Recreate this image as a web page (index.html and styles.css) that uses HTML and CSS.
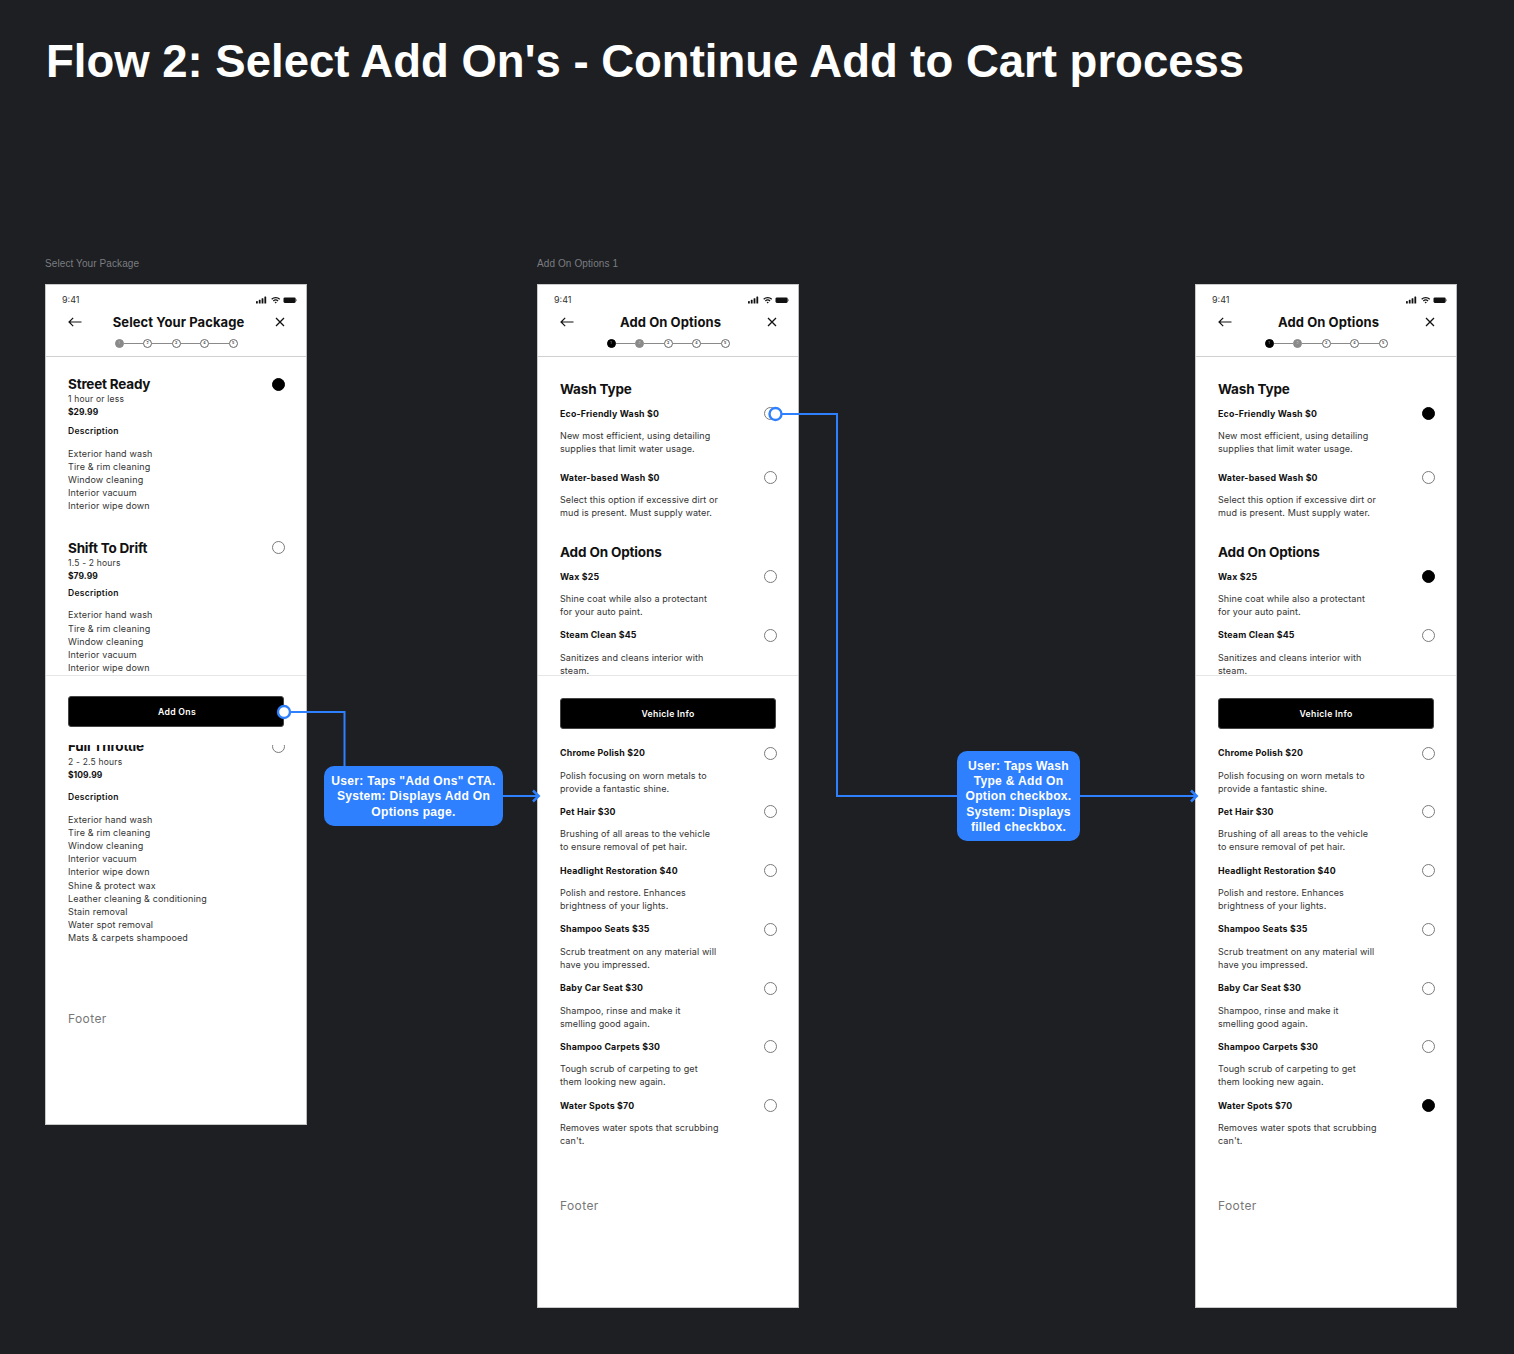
FILE: index.html
```html
<!DOCTYPE html>
<html lang="en">
<head>
<meta charset="utf-8">
<title>Flow 2</title>
<link rel="stylesheet" href="styles.css">
</head>
<body>
<svg class="sprite" aria-hidden="true">
  <symbol id="status" viewBox="0 0 41 8">
    <rect x="0" y="5" width="1.8" height="2.6" rx=".4"/><rect x="2.8" y="3.7" width="1.8" height="3.9" rx=".4"/><rect x="5.6" y="2.2" width="1.8" height="5.4" rx=".4"/><rect x="8.4" y=".6" width="1.8" height="7" rx=".4"/>
    <path d="M15.2 2.7a6.6 6.6 0 0 1 9 0l-.9 1a5.3 5.3 0 0 0-7.2 0zM16.9 4.5a4.1 4.1 0 0 1 5.6 0l-.9 1a2.8 2.8 0 0 0-3.8 0zM18.6 6.2a1.6 1.6 0 0 1 2.2 0l-1.1 1.3z"/>
    <rect x="27.5" y="1.4" width="12.2" height="5.6" rx="1.4"/><rect x="40" y="3.2" width=".9" height="2" rx=".4" opacity=".5"/>
  </symbol>
  <symbol id="back" viewBox="0 0 14 10"><path d="M13.5 5H1M5.2.8 1 5l4.2 4.2" fill="none" stroke="#111" stroke-width="1.2"/></symbol>
  <symbol id="close" viewBox="0 0 10 10"><path d="M1 1l8 8M9 1 1 9" fill="none" stroke="#111" stroke-width="1.3"/></symbol>
</svg>
<main class="canvas">
  <h1 class="flow-title">Flow 2: Select Add On's - Continue Add to Cart process</h1>

  <div class="board-label label-a">Select Your Package</div>
  <div class="board-label label-b">Add On Options 1</div>

  <section class="phone phone-a">
    <header class="head">
      <div class="status"><span>9:41</span><svg class="status-icons"><use href="#status"/></svg></div>
      <div class="nav"><svg class="back"><use href="#back"/></svg><span class="nav-title">Select Your Package</span><svg class="close"><use href="#close"/></svg></div>
      <div class="stepper"><i class="dot cur">1</i><b></b><i class="dot">2</i><b></b><i class="dot">3</i><b></b><i class="dot">4</i><b></b><i class="dot">5</i></div>
    </header>
    <div class="upper upper-pkg">
      <article class="pkg">
        <div class="pkg-head"><h2>Street Ready</h2><span class="radio on"></span></div>
        <p>1 hour or less</p><p class="price">$29.99</p>
        <h3>Description</h3>
        <ul><li>Exterior hand wash</li><li>Tire &amp; rim cleaning</li><li>Window cleaning</li><li>Interior vacuum</li><li>Interior wipe down</li></ul>
      </article>
      <article class="pkg pkg-second">
        <div class="pkg-head"><h2>Shift To Drift</h2><span class="radio"></span></div>
        <p>1.5 - 2 hours</p><p class="price">$79.99</p>
        <h3>Description</h3>
        <ul><li>Exterior hand wash</li><li>Tire &amp; rim cleaning</li><li>Window cleaning</li><li>Interior vacuum</li><li>Interior wipe down</li></ul>
      </article>
    </div>
    <div class="cta cta-pkg"><button class="cta-btn">Add Ons</button></div>
    <div class="lower">
      <article class="pkg pkg-third">
        <div class="pkg-head"><h2>Full Throttle</h2><span class="radio"></span></div>
        <p>2 - 2.5 hours</p><p class="price">$109.99</p>
        <h3>Description</h3>
        <ul class="long"><li>Exterior hand wash</li><li>Tire &amp; rim cleaning</li><li>Window cleaning</li><li>Interior vacuum</li><li>Interior wipe down</li><li>Shine &amp; protect wax</li><li>Leather cleaning &amp; conditioning</li><li>Stain removal</li><li>Water spot removal</li><li>Mats &amp; carpets shampooed</li></ul>
      </article>
      <div class="foot foot-pkg">Footer</div>
    </div>
  </section>

  <section class="phone phone-b">
    <header class="head">
      <div class="status"><span>9:41</span><svg class="status-icons"><use href="#status"/></svg></div>
      <div class="nav"><svg class="back"><use href="#back"/></svg><span class="nav-title">Add On Options</span><svg class="close"><use href="#close"/></svg></div>
      <div class="stepper"><i class="dot done">1</i><b></b><i class="dot cur">2</i><b></b><i class="dot">3</i><b></b><i class="dot">4</i><b></b><i class="dot">5</i></div>
    </header>
    <div class="upper">
      <h2 class="group">Wash Type</h2>
      <div class="opt opt-wide"><div class="opt-row"><h4>Eco-Friendly Wash $0</h4><span class="radio"></span></div><p>New most efficient, using detailing<br>supplies that limit water usage.</p></div>
      <div class="opt"><div class="opt-row"><h4>Water-based Wash $0</h4><span class="radio"></span></div><p>Select this option if excessive dirt or<br>mud is present. Must supply water.</p></div>
      <h2 class="group group-next">Add On Options</h2>
      <div class="opt"><div class="opt-row"><h4>Wax $25</h4><span class="radio"></span></div><p>Shine coat while also a protectant<br>for your auto paint.</p></div>
      <div class="opt"><div class="opt-row"><h4>Steam Clean $45</h4><span class="radio"></span></div><p>Sanitizes and cleans interior with<br>steam.</p></div>
    </div>
    <div class="cta"><button class="cta-btn">Vehicle Info</button></div>
    <div class="lower">
      <div class="opt"><div class="opt-row"><h4>Chrome Polish $20</h4><span class="radio"></span></div><p>Polish focusing on worn metals to<br>provide a fantastic shine.</p></div>
      <div class="opt"><div class="opt-row"><h4>Pet Hair $30</h4><span class="radio"></span></div><p>Brushing of all areas to the vehicle<br>to ensure removal of pet hair.</p></div>
      <div class="opt"><div class="opt-row"><h4>Headlight Restoration $40</h4><span class="radio"></span></div><p>Polish and restore. Enhances<br>brightness of your lights.</p></div>
      <div class="opt"><div class="opt-row"><h4>Shampoo Seats $35</h4><span class="radio"></span></div><p>Scrub treatment on any material will<br>have you impressed.</p></div>
      <div class="opt"><div class="opt-row"><h4>Baby Car Seat $30</h4><span class="radio"></span></div><p>Shampoo, rinse and make it<br>smelling good again.</p></div>
      <div class="opt"><div class="opt-row"><h4>Shampoo Carpets $30</h4><span class="radio"></span></div><p>Tough scrub of carpeting to get<br>them looking new again.</p></div>
      <div class="opt"><div class="opt-row"><h4>Water Spots $70</h4><span class="radio"></span></div><p>Removes water spots that scrubbing<br>can't.</p></div>
      <div class="foot">Footer</div>
    </div>
  </section>

  <section class="phone phone-c">
    <header class="head">
      <div class="status"><span>9:41</span><svg class="status-icons"><use href="#status"/></svg></div>
      <div class="nav"><svg class="back"><use href="#back"/></svg><span class="nav-title">Add On Options</span><svg class="close"><use href="#close"/></svg></div>
      <div class="stepper"><i class="dot done">1</i><b></b><i class="dot cur">2</i><b></b><i class="dot">3</i><b></b><i class="dot">4</i><b></b><i class="dot">5</i></div>
    </header>
    <div class="upper">
      <h2 class="group">Wash Type</h2>
      <div class="opt opt-wide"><div class="opt-row"><h4>Eco-Friendly Wash $0</h4><span class="radio on"></span></div><p>New most efficient, using detailing<br>supplies that limit water usage.</p></div>
      <div class="opt"><div class="opt-row"><h4>Water-based Wash $0</h4><span class="radio"></span></div><p>Select this option if excessive dirt or<br>mud is present. Must supply water.</p></div>
      <h2 class="group group-next">Add On Options</h2>
      <div class="opt"><div class="opt-row"><h4>Wax $25</h4><span class="radio on"></span></div><p>Shine coat while also a protectant<br>for your auto paint.</p></div>
      <div class="opt"><div class="opt-row"><h4>Steam Clean $45</h4><span class="radio"></span></div><p>Sanitizes and cleans interior with<br>steam.</p></div>
    </div>
    <div class="cta"><button class="cta-btn">Vehicle Info</button></div>
    <div class="lower">
      <div class="opt"><div class="opt-row"><h4>Chrome Polish $20</h4><span class="radio"></span></div><p>Polish focusing on worn metals to<br>provide a fantastic shine.</p></div>
      <div class="opt"><div class="opt-row"><h4>Pet Hair $30</h4><span class="radio"></span></div><p>Brushing of all areas to the vehicle<br>to ensure removal of pet hair.</p></div>
      <div class="opt"><div class="opt-row"><h4>Headlight Restoration $40</h4><span class="radio"></span></div><p>Polish and restore. Enhances<br>brightness of your lights.</p></div>
      <div class="opt"><div class="opt-row"><h4>Shampoo Seats $35</h4><span class="radio"></span></div><p>Scrub treatment on any material will<br>have you impressed.</p></div>
      <div class="opt"><div class="opt-row"><h4>Baby Car Seat $30</h4><span class="radio"></span></div><p>Shampoo, rinse and make it<br>smelling good again.</p></div>
      <div class="opt"><div class="opt-row"><h4>Shampoo Carpets $30</h4><span class="radio"></span></div><p>Tough scrub of carpeting to get<br>them looking new again.</p></div>
      <div class="opt"><div class="opt-row"><h4>Water Spots $70</h4><span class="radio on"></span></div><p>Removes water spots that scrubbing<br>can't.</p></div>
      <div class="foot">Footer</div>
    </div>
  </section>

  <svg class="wires" viewBox="0 0 1514 1354">
    <path class="wire" d="M290 712H344.5V767"/>
    <path class="wire" d="M503 796H538.5"/>
    <path class="wire chevron" d="M533 790.500 538.700 796 533 801.500"/>
    <circle class="node" cx="284" cy="712" r="6"/>
    <path class="wire" d="M781 414H837V796H957"/>
    <path class="wire" d="M1080 796H1196"/>
    <path class="wire chevron" d="M1191 790.500 1196.700 796 1191 801.500"/>
    <circle class="node" cx="775.500" cy="414" r="6"/>
  </svg>

  <div class="note note-a">User: Taps "Add Ons" CTA.<br>System: Displays Add On<br>Options page.</div>
  <div class="note note-b">User: Taps Wash<br>Type &amp; Add On<br>Option checkbox.<br>System: Displays<br>filled checkbox.</div>
</main>
</body>
</html>
```
FILE: styles.css
```css
* { box-sizing: border-box; }
html, body { margin: 0; padding: 0; background: #1e1f22; }
.sprite { width: 0; height: 0; position: absolute; }
.canvas { position: relative; width: 1514px; height: 1354px; overflow: hidden; background: #1e1f22; font-family: Inter, "Noto Sans", sans-serif; }
.flow-title { margin: 0; padding: 35px 0 0 46px; font: 700 45.500px/54px "Liberation Sans", Arial, sans-serif; color: #fff; white-space: nowrap; }
.board-label { position: absolute; top: 257px; font: 400 10px/13px "Liberation Sans", Arial, sans-serif; letter-spacing: .1px; color: #7a7d81; }
.label-a { left: 45px; }
.label-b { left: 537px; }

.phone { position: absolute; top: 284px; width: 262px; background: #fff; border: 1px solid #c9c9c9; border-right-color: #bdbdbd; display: flex; flex-direction: column; overflow: hidden; color: #111; }
.phone-a { left: 45px; height: 841px; }
.phone-b { left: 537px; height: 1024px; }
.phone-c { left: 1195px; height: 1024px; }

.head { height: 72px; flex: none; border-bottom: 1px solid #d0d0d0; }
.status { display: flex; justify-content: space-between; align-items: center; height: 14px; margin-top: 8px; padding: 0 9px 0 16px; font-size: 9px; line-height: 14px; color: #333; }
.status-icons { width: 41px; height: 8px; fill: #111; }
.nav { display: flex; justify-content: space-between; align-items: center; height: 20px; margin-top: 5px; padding: 0 21px 0 22px; }
.back { width: 14px; height: 10px; }
.close { width: 10px; height: 10px; }
.nav-title { font-size: 13px; font-weight: 700; line-height: 20px; letter-spacing: .08px; color: #111; }
.stepper { display: flex; justify-content: center; align-items: center; height: 9px; margin-top: 7px; }
.stepper b { width: 19.500px; height: 1px; background: #8a8a8a; }
.dot { width: 9px; height: 9px; border-radius: 50%; border: .8px solid #666; background: #fff; color: #333; font-size: 3.500px; font-style: normal; font-weight: 600; line-height: 7.500px; text-align: center; }
.dot.cur { background: #8a8a8a; border-color: #8a8a8a; color: #bbb; }
.dot.done { background: #000; border-color: #000; color: #888; }

.upper { height: 318px; flex: none; overflow: hidden; padding: 22px 21.500px 0 22px; }
.upper-pkg { padding-top: 19px; }
.lower { flex: 1; overflow: hidden; padding: 0 21.500px 0 22px; }

.cta { height: 70px; flex: none; padding: 22px 0 0 22px; border-top: 1px solid #e6e6e6; }
.cta-pkg { padding-top: 20px; }
.cta-btn { display: block; width: 216px; height: 31px; padding: 2px 0 0; border: 1px solid #444; border-radius: 3px; background: #000; color: #fff; font: 600 8.700px/1 Inter, sans-serif; letter-spacing: .3px; }
.cta-pkg .cta-btn { padding-left: 2px; }

.radio { flex: none; width: 13px; height: 13px; border-radius: 50%; border: 1px solid #7a7a7a; background: #fff; }
.radio.on { background: #000; border-color: #000; }

.pkg-head { display: flex; justify-content: space-between; align-items: center; height: 16px; }
.pkg h2 { margin: 0; font-size: 13.500px; font-weight: 700; line-height: 16px; letter-spacing: -.2px; color: #111; }
.pkg p { margin: 1px 0 -1px; font-size: 8.500px; line-height: 13px; letter-spacing: .2px; color: #333; }
.pkg .price { font-weight: 700; letter-spacing: .05px; color: #111; }
.pkg h3 { margin: 7px 0 9px; font-size: 8.500px; font-weight: 600; line-height: 13px; letter-spacing: .3px; color: #111; }
.pkg ul { margin: 0; padding: 0; list-style: none; font-size: 9px; line-height: 13.100px; letter-spacing: .15px; color: #333; }
.pkg ul.long { line-height: 13.200px; }
.pkg-second { margin-top: 27.500px; }
.pkg-second h3 { margin: 5px 0 8.500px; }
.pkg-third { margin-top: -7px; }
.pkg-third p:first-of-type { margin-top: 1.500px; }
.pkg-third h3 { margin: 10px 0 9px; }
.foot { margin-top: 51px; font-size: 12px; line-height: 16px; letter-spacing: .4px; color: #777; }
.foot-pkg { margin-top: 66px; }

h2.group { margin: 0 0 6.500px; font-size: 13.500px; font-weight: 700; line-height: 20px; letter-spacing: -.15px; color: #111; }
h2.group-next { margin-top: 23px; }
.opt { margin-bottom: 9.250px; }
.opt-wide { margin-bottom: 14.500px; }
.opt-row { display: flex; justify-content: space-between; align-items: center; height: 16px; }
.opt h4 { margin: 0; font-size: 8.800px; font-weight: 700; line-height: 16px; letter-spacing: .2px; color: #111; }
.opt p { margin: 7.500px 0 .5px; font-size: 9px; line-height: 13px; letter-spacing: .1px; color: #333; }

.wires { position: absolute; left: 0; top: 0; width: 1514px; height: 1354px; pointer-events: none; }
.wire { fill: none; stroke: #2e80ff; stroke-width: 2; }
.chevron { stroke-width: 2.500; }
.node { fill: #fff; stroke: #2e80ff; stroke-width: 2.400; }

.note { position: absolute; padding-top: 2px; background: #2e80ff; color: #fff; border-radius: 10px; text-align: center; font: 700 12.100px/15.300px "Liberation Sans", Arial, sans-serif; letter-spacing: .28px; white-space: nowrap; display: flex; align-items: center; justify-content: center; }
.note-a { left: 324px; top: 766px; width: 179px; height: 60px; }
.note-b { left: 957px; top: 751px; width: 123px; height: 90px; }
```
